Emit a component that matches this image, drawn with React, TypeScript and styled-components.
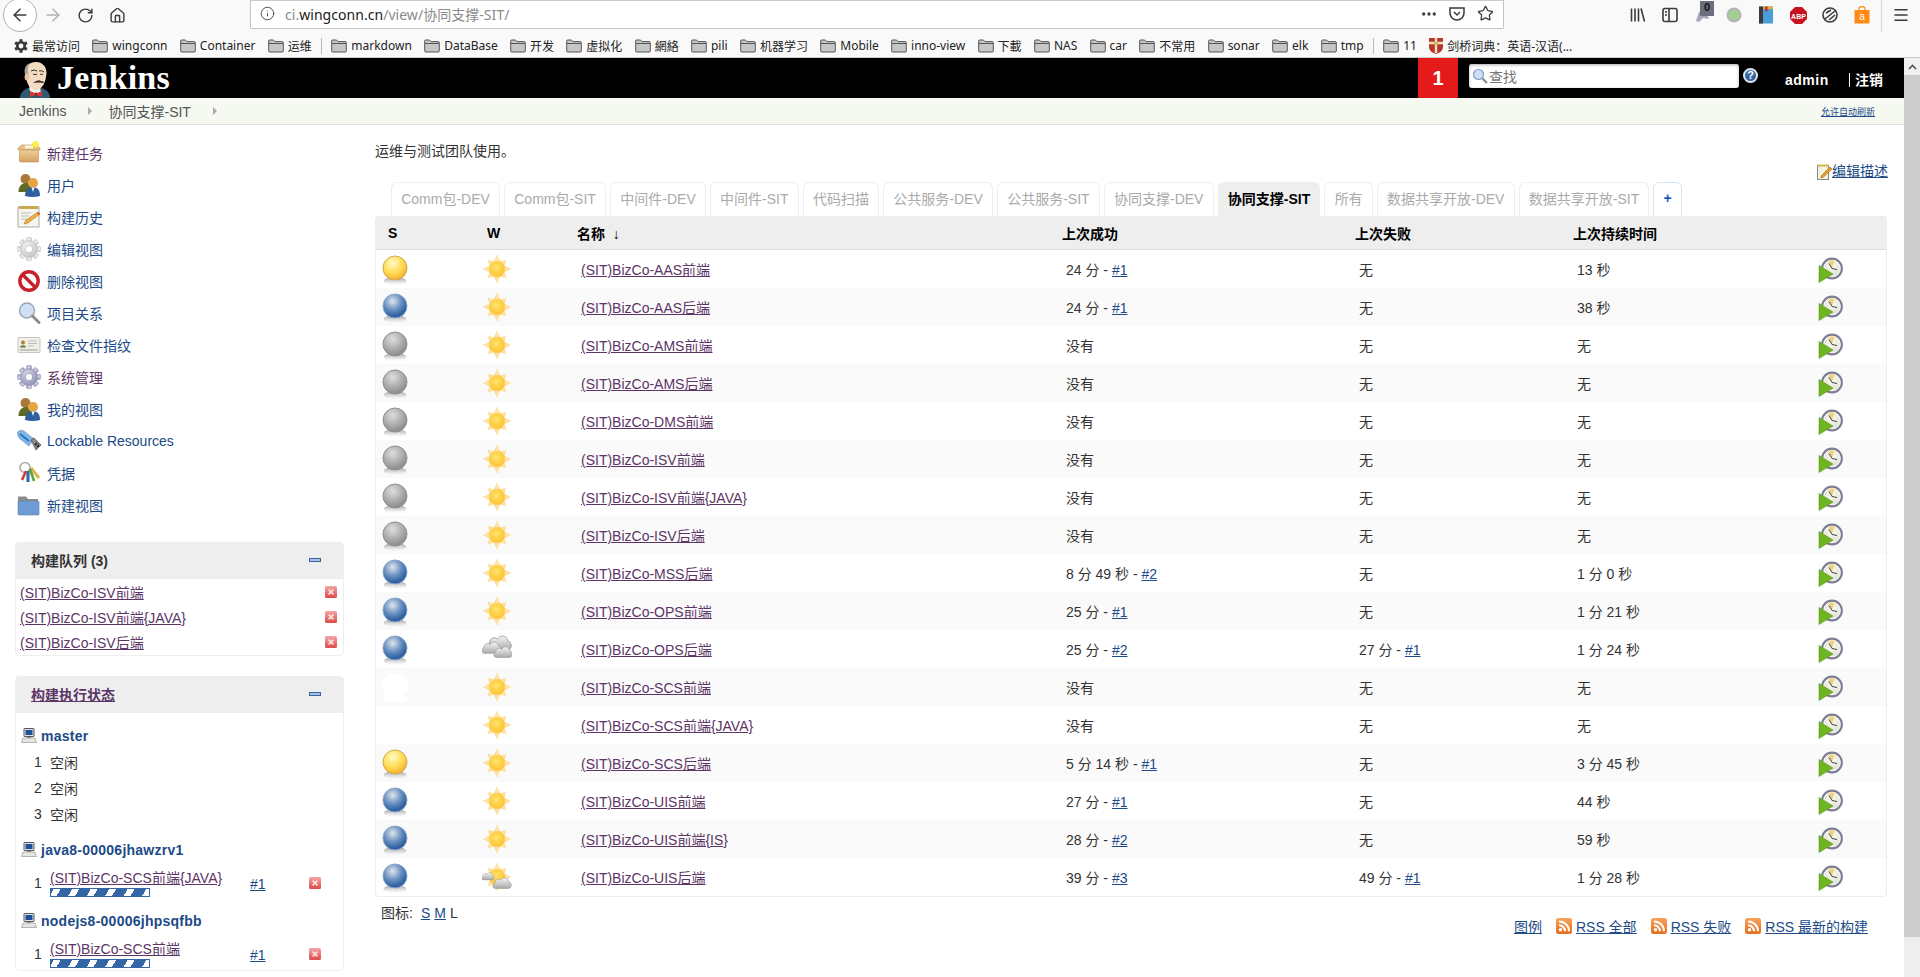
import React from "react";
import styled, { createGlobalStyle } from "styled-components";
import { ArrowLeft, ArrowRight, RotateCw, Home, Info, Star, Menu, Ellipsis } from "lucide-react";

const SANS = `"Liberation Sans", "Noto Sans CJK SC", sans-serif`;
const LINK = "#204a87";
const VISITED = "#5c3566";

const GlobalStyle = createGlobalStyle`
  html, body { margin: 0; padding: 0; height: 100%; overflow: hidden; background: #fff; }
  body { font-family: ${SANS}; font-size: 14px; color: #333; }
  a { cursor: pointer; }
`;

const Page = styled.div`
  width: 1920px;
  height: 977px;
  display: flex;
  flex-direction: column;
  overflow: hidden;
`;

/* ---------- browser chrome ---------- */
const Toolbar = styled.div`
  height: 33px;
  flex: none;
  display: flex;
  align-items: flex-start;
  background: #f9f9fa;
  color: #3b3b3d;
  padding-left: 3px;
`;
const BackButton = styled.div`
  width: 34px;
  height: 34px;
  margin-top: -2px;
  box-sizing: border-box;
  border: 1px solid #b1b1b3;
  border-radius: 50%;
  background: #fff;
  display: flex;
  align-items: center;
  justify-content: center;
  flex: none;
`;
const ToolSlot = styled.div<{ $muted?: boolean }>`
  position: relative;
  width: 32px;
  height: 30px;
  flex: none;
  display: flex;
  align-items: center;
  justify-content: center;
  color: ${(p) => (p.$muted ? "#b1b1b3" : "#3b3b3d")};
`;
const UrlBar = styled.div`
  width: 1254px;
  height: 29px;
  margin-left: 117px;
  box-sizing: border-box;
  flex: none;
  display: flex;
  align-items: center;
  background: #fff;
  border: 1px solid #c4c4c4;
  border-top-color: #ccc;
  border-radius: 0 0 2px 2px;
  padding: 0 4px 2px 9px;
  font-family: "Noto Sans", "Noto Sans CJK SC", sans-serif;
  font-size: 14px;
  color: #8a8a8a;
`;
const UrlText = styled.span`
  margin-left: 10px;
  flex: 1;
  letter-spacing: 0.04px;
  b { font-weight: 400; color: #1a1a1a; }
`;
const UrlAction = styled.span`
  width: 28px;
  display: flex;
  justify-content: center;
  color: #3b3b3d;
`;
const ToolRight = styled.div`
  margin-left: auto;
  display: flex;
  align-items: flex-start;
  padding-right: 3px;
`;
const ToolDivider = styled.div`
  width: 1px;
  height: 32px;
  background: #d8d8d8;
  margin: 0 3px;
`;
const AvastBadge = styled.span`
  position: absolute;
  top: 1px;
  right: 4px;
  width: 14px;
  height: 15px;
  background: #6d6d80;
  color: #111;
  font-size: 11px;
  font-weight: 700;
  text-align: center;
  line-height: 13px;
`;

const BookmarkBar = styled.div`
  height: 25px;
  flex: none;
  box-sizing: border-box;
  display: flex;
  align-items: center;
  gap: 12.3px;
  padding: 1px 0 0 14px;
  background: #f9f9fa;
  border-bottom: 1px solid #ccc;
  font-family: "Noto Sans", "Noto Sans CJK SC", sans-serif;
  font-size: 12px;
  color: #222;
  white-space: nowrap;
`;
const Bookmark = styled.span`
  display: flex;
  align-items: center;
  gap: 4px;
`;
const BookmarkSep = styled.span`
  width: 1px;
  height: 16px;
  background: #bbb;
  margin: 0 -3px;
`;

/* ---------- jenkins page ---------- */
const Viewport = styled.div`
  flex: 1;
  min-height: 0;
  display: flex;
`;
const Scrollbar = styled.div`
  width: 16px;
  flex: none;
  display: flex;
  flex-direction: column;
  background: #eee;
`;
const ScrollUp = styled.div`
  height: 17px;
  background: #f1f1f1;
  color: #555;
  display: flex;
  justify-content: center;
  align-items: center;
`;
const ScrollThumb = styled.div`
  height: 862px;
  background: #cdcdcd;
`;
const Content = styled.div`
  flex: 1;
  min-width: 0;
  display: flex;
  flex-direction: column;
`;
const Header = styled.header`
  height: 40px;
  flex: none;
  display: flex;
  align-items: stretch;
  background: #000;
  color: #fff;
`;
const Logo = styled.div`
  display: flex;
  align-items: flex-end;
  padding-left: 18px;
  width: 1400px;
  flex: none;
`;
const LogoText = styled.span`
  font-family: "Liberation Serif", serif;
  font-weight: 700;
  font-size: 34px;
  line-height: 36px;
  margin: 0 0 2px 6px;
  letter-spacing: 0.2px;
`;
const Badge = styled.div`
  width: 40px;
  flex: none;
  background: #e31b1b;
  font-weight: 700;
  font-size: 20px;
  display: flex;
  align-items: center;
  justify-content: center;
`;
const Search = styled.div`
  width: 270px;
  height: 24px;
  margin: 6px 0 0 11px;
  flex: none;
  display: flex;
  align-items: center;
  gap: 1px;
  padding-left: 3px;
  box-sizing: border-box;
  background: #fff;
  border-radius: 3px;
  box-shadow: inset 0 1px 3px #aaa;
  color: #777;
  font-size: 14px;
`;
const HelpIcon = styled.span`
  margin: 10px 0 0 4px;
  width: 15px;
  height: 15px;
  flex: none;
  box-sizing: border-box;
  border: 2px solid #dce6f2;
  background: #36659f;
  border-radius: 50%;
  color: #fff;
  font-size: 11px;
  font-weight: 700;
  line-height: 11px;
  text-align: center;
`;
const UserName = styled.span`
  margin: 0 0 0 27px;
  width: 64px;
  flex: none;
  font-weight: 700;
  font-size: 14px;
  letter-spacing: 0.5px;
  line-height: 40px;
  padding-top: 2px;
  box-sizing: border-box;
`;
const Logout = styled.span`
  font-weight: 700;
  font-size: 14px;
  line-height: 14px;
  height: 14px;
  margin-top: 15px;
  padding-left: 5px;
  border-left: 1px solid #fff;
`;
const Breadcrumb = styled.nav`
  height: 27px;
  flex: none;
  box-sizing: border-box;
  display: flex;
  align-items: center;
  padding: 0 29px 0 19px;
  background: #f6f8f2;
  border-bottom: 1px solid #ddd;
  color: #555;
  font-size: 14px;
`;
const CrumbArrow = styled.span`
  width: 0;
  height: 0;
  margin: 0 16px 0 22px;
  border-left: 4px solid #aaa;
  border-top: 4px solid transparent;
  border-bottom: 4px solid transparent;
`;
const AutoRefresh = styled.a`
  margin-left: auto;
  font-size: 9px;
  color: ${LINK};
  text-decoration: underline;
`;
const Body = styled.div`
  flex: 1;
  min-height: 0;
  display: flex;
`;
const Side = styled.aside`
  width: 329px;
  margin: 12px 31px 0 15px;
  flex: none;
`;
const Tasks = styled.div`
  display: flex;
  flex-direction: column;
  margin-bottom: 21px;
`;
const Task = styled.a<{ $visited?: boolean }>`
  height: 32px;
  display: flex;
  align-items: center;
  gap: 6px;
  margin-left: 2px;
  color: ${(p) => (p.$visited ? VISITED : LINK)};
`;
const Pane = styled.section`
  border: 1px solid #eee;
  border-radius: 4px;
  margin-bottom: 20px;
  box-sizing: border-box;
`;
const PaneHead = styled.div`
  height: 36px;
  box-sizing: border-box;
  display: flex;
  align-items: center;
  justify-content: space-between;
  padding: 0 22px 2px 15px;
  background: #eee;
  font-weight: 700;
  font-size: 14px;
  color: #333;
  a { color: ${VISITED}; text-decoration: underline; }
`;
const Collapse = styled.span`
  width: 12px;
  height: 4px;
  box-sizing: border-box;
  background: #a9c1e3;
  border: 1px solid #3465a4;
`;
const QueueList = styled.div`
  padding: 0 6px 0 4px;
`;
const QueueRow = styled.div`
  height: 25.33px;
  display: flex;
  align-items: center;
  justify-content: space-between;
  a { color: ${VISITED}; text-decoration: underline; }
`;
const NodeName = styled.div`
  height: 24px;
  margin: 11px 0 1px;
  display: flex;
  align-items: center;
  gap: 4px;
  padding-left: 5px;
  font-weight: 700;
  font-size: 14px;
  letter-spacing: 0.25px;
  color: ${LINK};
`;
const Executors = styled.div`
  padding-bottom: 1px;
`;
const IdleRow = styled.div`
  height: 26px;
  display: flex;
  align-items: center;
  padding-left: 18px;
  span:first-child { width: 16px; }
`;
const JobRow = styled.div`
  display: grid;
  grid-template-columns: 16px 200px 59px 12px;
  align-items: center;
  padding: 6px 0 1px 18px;
`;
const JobName = styled.div`
  a { display: block; line-height: 19px; color: ${VISITED}; text-decoration: underline; }
`;
const ProgressBar = styled.div`
  width: 100px;
  height: 9px;
  box-sizing: border-box;
  border: 1px solid #3465a4;
  background: #fff;
`;
const ProgressFill = styled.div`
  height: 100%;
  background: repeating-linear-gradient(-60deg, #fff 0, #fff 6px, #3465a4 6px, #3465a4 16px);
`;
const BuildLink = styled.a`
  color: ${LINK};
  text-decoration: underline;
  padding-top: 3px;
`;
const Main = styled.main`
  width: 1513px;
  flex: none;
`;
const DescRow = styled.div`
  height: 57px;
  display: flex;
  justify-content: space-between;
  color: #333;
`;
const DescText = styled.div`
  padding-top: 17px;
  line-height: 18px;
`;
const EditDesc = styled.a`
  align-self: flex-end;
  display: flex;
  align-items: flex-end;
  margin-bottom: 2px;
  color: ${LINK};
  text-decoration: underline;
`;
const Tabs = styled.div`
  display: flex;
  gap: 4px;
  padding-left: 16px;
  height: 34px;
`;
const Tab = styled.div<{ $active?: boolean; $plus?: boolean }>`
  box-sizing: border-box;
  padding: 0 ${(p) => (p.$plus ? 9 : 9.2)}px 3px;
  display: flex;
  align-items: center;
  white-space: nowrap;
  border: 1px solid ${(p) => (p.$active ? "#eee" : p.$plus ? "#d5e5f7" : "#eee")};
  border-bottom: none;
  border-radius: 6px 6px 0 0;
  background: ${(p) => (p.$active ? "#eee" : "#fff")};
  color: ${(p) => (p.$active ? "#000" : p.$plus ? "#1a5fc4" : "#aaa")};
  font-weight: ${(p) => (p.$active || p.$plus ? 700 : 400)};
`;
const Table = styled.table`
  width: 1512px;
  table-layout: fixed;
  border-collapse: separate;
  border-spacing: 0;
  border: 1px solid #eee;
  border-top: none;
  border-radius: 4px;
`;
const Th = styled.th<{ $pad?: number }>`
  height: 33px;
  padding: 0 0 0 ${(p) => p.$pad ?? 6}px;
  background: #eee;
  border-bottom: 1px solid #ddd;
  text-align: left;
  font-size: 14px;
  color: #000;
`;
const Tr = styled.tr`
  &:nth-child(even) td { background: #fafafa; }
`;
const Td = styled.td<{ $pad?: number }>`
  height: 38px;
  padding: 0 0 0 ${(p) => p.$pad ?? 10}px;
  box-sizing: border-box;
  vertical-align: middle;
  color: #333;
  svg { display: block; }
`;
const JobLink = styled.a`
  color: ${VISITED};
  text-decoration: underline;
`;
const RunLink = styled.a`
  color: ${LINK};
  text-decoration: underline;
`;
const Footer = styled.div`
  display: flex;
  justify-content: space-between;
  padding: 7px 20px 0 6px;
`;
const IconSizes = styled.div`
  display: flex;
  gap: 4px;
  line-height: 18px;
  span:first-child { margin-right: 4px; }
  a { color: ${LINK}; text-decoration: underline; }
`;
const RssLinks = styled.div`
  display: flex;
  gap: 14px;
  margin-top: 12px;
`;
const RssLink = styled.a`
  display: flex;
  align-items: center;
  gap: 4px;
  color: ${LINK};
  text-decoration: underline;
`;

/* ---------- drawings ---------- */
const SharedDefs = styled.svg`
  position: absolute;
  width: 0;
  height: 0;
`;
const Defs = () => (
  <SharedDefs aria-hidden="true">
    <defs>
      <radialGradient id="ball-blue" cx="40%" cy="30%" r="72%">
        <stop offset="0" stopColor="#e0e6ea" />
        <stop offset="0.5" stopColor="#6a91c2" />
        <stop offset="0.9" stopColor="#2c5d9e" />
        <stop offset="1" stopColor="#3b6aa8" />
      </radialGradient>
      <radialGradient id="ball-yellow" cx="40%" cy="30%" r="75%">
        <stop offset="0" stopColor="#fffbc8" />
        <stop offset="0.55" stopColor="#ffdc55" />
        <stop offset="1" stopColor="#f7a72a" />
      </radialGradient>
      <radialGradient id="ball-grey" cx="40%" cy="30%" r="75%">
        <stop offset="0" stopColor="#dedede" />
        <stop offset="0.6" stopColor="#a8a8a8" />
        <stop offset="1" stopColor="#858585" />
      </radialGradient>
      <linearGradient id="ball-shadow" x1="0" y1="0" x2="0" y2="1">
        <stop offset="0" stopColor="#777" stopOpacity="0.75" />
        <stop offset="1" stopColor="#bbb" stopOpacity="0" />
      </linearGradient>
      <radialGradient id="sun-core" cx="45%" cy="40%" r="60%">
        <stop offset="0" stopColor="#ffe46a" />
        <stop offset="1" stopColor="#fdc22e" />
      </radialGradient>
      <linearGradient id="cloud-fill" x1="0" y1="0" x2="0" y2="1">
        <stop offset="0" stopColor="#f6f6f6" />
        <stop offset="1" stopColor="#a9a9a9" />
      </linearGradient>
      <radialGradient id="clock-face" cx="50%" cy="40%" r="60%">
        <stop offset="0" stopColor="#fdfdf5" />
        <stop offset="1" stopColor="#d8d8cc" />
      </radialGradient>
      <linearGradient id="red-box" x1="0" y1="0" x2="0" y2="1">
        <stop offset="0" stopColor="#f3a6a6" />
        <stop offset="1" stopColor="#dc4a4a" />
      </linearGradient>
      <linearGradient id="rss-box" x1="0" y1="0" x2="0" y2="1">
        <stop offset="0" stopColor="#f7a25a" />
        <stop offset="1" stopColor="#e4701e" />
      </linearGradient>
      <linearGradient id="carton" x1="0" y1="0" x2="0" y2="1">
        <stop offset="0" stopColor="#f0d09c" />
        <stop offset="1" stopColor="#d3a260" />
      </linearGradient>
      <radialGradient id="steel" cx="40%" cy="35%" r="70%">
        <stop offset="0" stopColor="#f7f7f7" />
        <stop offset="1" stopColor="#c2c2c2" />
      </radialGradient>
      <radialGradient id="steel-blue" cx="40%" cy="35%" r="70%">
        <stop offset="0" stopColor="#dcdcec" />
        <stop offset="1" stopColor="#8c8cb4" />
      </radialGradient>
    </defs>
  </SharedDefs>
);

type BallColor = "blue" | "yellow" | "grey" | "ghost" | "none";

const Ball = ({ color }: { color: BallColor }) => {
  if (color === "none") return <svg width="26" height="32" />;
  if (color === "ghost")
    return (
      <svg width="26" height="32" viewBox="0 0 26 32">
        <circle cx="13" cy="15" r="13" fill="#fff" />
        <ellipse cx="13" cy="28" rx="13" ry="3.5" fill="#fff" />
      </svg>
    );
  const stroke = color === "blue" ? "#86a4cc" : color === "yellow" ? "#c9ad4e" : "#909090";
  return (
    <svg width="26" height="32" viewBox="0 0 26 32">
      <ellipse cx="13" cy="28" rx="11.5" ry="4" fill="url(#ball-shadow)" />
      <circle cx="13" cy="15" r="12" fill={`url(#ball-${color})`} stroke={stroke} />
    </svg>
  );
};

const Rays = ({ cx, cy, r }: { cx: number; cy: number; r: number }) => (
  <>
    {[0, 45, 90, 135, 180, 225, 270, 315].map((a, i) => {
      const tip = i % 2 === 0 ? r : r * 0.9;
      return (
        <g key={a} transform={`rotate(${a} ${cx} ${cy})`}>
          <polygon points={`${cx - 3.4},${cy - 7} ${cx},${cy - tip} ${cx + 3.4},${cy - 7}`} fill="#ffdc94" />
          <path d={`M${cx} ${cy - 8} V${cy - tip + 2}`} stroke="#fff0c8" strokeWidth="0.8" />
        </g>
      );
    })}
  </>
);

const CloudShape = ({ x, y, s }: { x: number; y: number; s: number }) => (
  <g transform={`translate(${x} ${y}) scale(${s})`}>
    <path
      d="M4 18 C0.5 18 0 12.5 3.5 11.5 C3 6.5 9 5 11 8 C13 3 20.5 4 20.5 9.5 C25 9.5 25.5 18 20.5 18 Z"
      fill="url(#cloud-fill)"
      stroke="#999"
      strokeWidth="0.8"
    />
  </g>
);

const Weather = ({ kind }: { kind: "sun" | "cloud" | "partly" }) => (
  <svg width="30" height="30" viewBox="0 0 30 30">
    {kind !== "cloud" && (
      <>
        <Rays cx={15} cy={15} r={14.5} />
        <circle cx="15" cy="15" r="8" fill="url(#sun-core)" stroke="#fbd98a" strokeWidth="0.6" />
      </>
    )}
    {kind === "cloud" && (
      <>
        <CloudShape x={4} y={-3} s={1.05} />
        <CloudShape x={-1} y={4} s={0.85} />
        <CloudShape x={11} y={9} s={0.8} />
      </>
    )}
    {kind === "partly" && (
      <>
        <CloudShape x={-1} y={8} s={0.55} />
        <CloudShape x={10} y={12} s={0.8} />
      </>
    )}
  </svg>
);

const ClockRun = () => (
  <svg width="25" height="28" viewBox="0 -1.5 25 28">
    <circle cx="14" cy="12" r="9.8" fill="url(#clock-face)" stroke="#7d7d95" strokeWidth="2.2" />
    <circle cx="14" cy="12" r="8.2" fill="none" stroke="#fff" strokeWidth="0.9" />
    <path d="M14 12 L10.5 4.5 A8 8 0 0 1 16.5 4.3 Z" fill="#ecd27a" />
    <path d="M14 12 L11 7 M14 12 L19 13" stroke="#444" strokeWidth="1" />
    <polygon points="1,9 15,17.5 1,26" fill="#6fb51f" stroke="#4f8f14" strokeWidth="0.5" />
  </svg>
);

const RedX = () => (
  <svg width="12" height="12" viewBox="0 0 12 12">
    <rect width="12" height="12" rx="1.5" fill="url(#red-box)" />
    <path d="M3.6 3.6 L8.4 8.4 M8.4 3.6 L3.6 8.4" stroke="#fbe3e3" strokeWidth="1.6" />
  </svg>
);

const Rss = () => (
  <svg width="16" height="16" viewBox="0 0 16 16">
    <rect width="16" height="16" rx="2.5" fill="url(#rss-box)" />
    <circle cx="4.5" cy="11.8" r="1.7" fill="#fff" />
    <path d="M3 7.2 A6 6 0 0 1 9 13.3 M3 3.4 A9.8 9.8 0 0 1 13 13.3" fill="none" stroke="#fff" strokeWidth="2" />
  </svg>
);

const Computer = () => (
  <svg width="16" height="15" viewBox="0 0 16 15">
    <rect x="3" y="0.5" width="10" height="8" rx="0.5" fill="#dfe3e8" stroke="#555" />
    <rect x="4.5" y="2" width="7" height="5" fill="#1f4f96" />
    <rect x="6" y="9" width="4" height="1" fill="#888" />
    <path d="M2 10 H14 L15.5 14.5 H0.5 Z" fill="#e6e6e0" stroke="#999" strokeWidth="0.7" />
  </svg>
);

const FolderSmall = () => (
  <svg width="16" height="14" viewBox="0 0 16 14">
    <path
      d="M0.7 2 Q0.7 1 1.7 1 H5.5 L7 2.6 H14.3 Q15.3 2.6 15.3 3.6 V12 Q15.3 13 14.3 13 H1.7 Q0.7 13 0.7 12 Z"
      fill="#c6c6c6"
      stroke="#555"
    />
    <path d="M1 4.5 H15" stroke="#555" />
  </svg>
);

const Gear = ({ fill, stroke }: { fill: string; stroke: string }) => (
  <svg width="24" height="24" viewBox="0 0 24 24">
    {[0, 45, 90, 135, 180, 225, 270, 315].map((a) => (
      <rect key={a} x="9.5" y="0.5" width="5" height="6" rx="1" fill={fill} stroke={stroke} strokeWidth="0.5" transform={`rotate(${a} 12 12)`} />
    ))}
    <circle cx="12" cy="12" r="8.5" fill={fill} stroke={stroke} strokeWidth="0.5" />
    <circle cx="12" cy="12" r="3.8" fill="#fff" stroke={stroke} strokeWidth="0.8" />
  </svg>
);

const Users = () => (
  <svg width="24" height="24" viewBox="0 0 24 24">
    <circle cx="8.5" cy="6" r="5" fill="#a87a35" />
    <path d="M1.5 19 C1.5 12 6 10 9 10 C12 10 15 12 15 19 Z" fill="#5f6b25" />
    <circle cx="16" cy="10" r="5" fill="#e8a444" />
    <path d="M8 23 C8 16 12 14.5 16 14.5 C20 14.5 23 16 23 23 Q16 25 8 23 Z" fill="#2f5f9f" />
    <path d="M14.5 14.5 L16 19 L17.5 14.5 Z" fill="#fff" />
  </svg>
);

const TASK_ICONS: Record<string, React.ReactNode> = {
  box: (
    <svg width="24" height="24" viewBox="0 0 24 24">
      <path d="M1 7 L5 4 H19 L23 7 V9 H1 Z" fill="#e8c288" stroke="#b98f52" strokeWidth="0.6" />
      <rect x="2.5" y="9" width="19" height="12" rx="1" fill="url(#carton)" stroke="#b98f52" strokeWidth="0.6" />
      <rect x="8" y="4.5" width="8" height="3" fill="#fff4dc" />
      <circle cx="18.5" cy="3.5" r="3" fill="#fff04a" stroke="#f3d21c" strokeWidth="0.5" />
    </svg>
  ),
  users: <Users />,
  notes: (
    <svg width="24" height="24" viewBox="0 0 24 24">
      <rect x="1" y="2" width="21" height="20" fill="#f6f6ee" stroke="#aaa" />
      <rect x="2" y="1" width="19" height="3" fill="#c9a84e" />
      <path d="M4 8 H14 M4 11 H12 M4 14 H10" stroke="#bbb" />
      <path d="M7 19 L9 15 L21 7 L23 9 L11 18 Z" fill="#f0b040" stroke="#a46a1a" strokeWidth="0.5" />
      <path d="M21 7 L23 9 L22 10 L20 8 Z" fill="#d8452e" />
    </svg>
  ),
  gear: <Gear fill="url(#steel)" stroke="#bdbdbd" />,
  forbid: (
    <svg width="24" height="24" viewBox="0 0 24 24">
      <circle cx="12" cy="12" r="9.2" fill="#fff" stroke="#c8202a" strokeWidth="3.4" />
      <path d="M5.5 5.5 L18.5 18.5" stroke="#c8202a" strokeWidth="3.4" />
    </svg>
  ),
  search: (
    <svg width="24" height="24" viewBox="0 0 24 24">
      <circle cx="10" cy="9.5" r="7.5" fill="#cfe0f5" stroke="#9aa5b4" strokeWidth="1.4" />
      <path d="M15.5 15 L22 21.5" stroke="#8d8d8d" strokeWidth="3" strokeLinecap="round" />
    </svg>
  ),
  card: (
    <svg width="24" height="24" viewBox="0 0 24 24">
      <rect x="1" y="4.5" width="22" height="15" rx="1" fill="#f0f0e8" stroke="#c4c4c4" />
      <circle cx="6" cy="9.5" r="2" fill="#b4802e" />
      <path d="M3 14.5 C3 11.5 9 11.5 9 14.5 Z" fill="#6a7a2a" />
      <path d="M11 8 H20 M11 10.5 H20 M11 13 H17" stroke="#bbb" />
      <path d="M3 17 H21" stroke="#999" />
    </svg>
  ),
  manage: <Gear fill="url(#steel-blue)" stroke="#8a8aa8" />,
  usb: (
    <svg width="24" height="24" viewBox="0 0 24 24">
      <path d="M0.5 3 Q3 0 7 2 L17 10 L12 17 L3 10 Q0 7 0.5 3 Z" fill="#7fb7e8" stroke="#88a" strokeWidth="0.6" />
      <path d="M3 5 L12 12" stroke="#1b70c0" strokeWidth="1.6" />
      <path d="M14 11 L17 9 L24 16 L19 21 Z" fill="#888" stroke="#333" strokeWidth="0.6" />
      <path d="M18 16 L20 14 M20 18 L22 16" stroke="#111" strokeWidth="1.4" />
    </svg>
  ),
  keys: (
    <svg width="24" height="24" viewBox="0 0 24 24">
      <circle cx="8" cy="6.5" r="5" fill="none" stroke="#aaa" strokeWidth="1.6" />
      <path d="M14 7 L22 17" stroke="#d9b54a" strokeWidth="3" />
      <path d="M11 10 L11 21" stroke="#2d6fb5" strokeWidth="3.2" />
      <path d="M13 8 L17 20" stroke="#5ea83a" strokeWidth="2.6" />
      <path d="M9 10 L5 19" stroke="#d23a3a" strokeWidth="2.6" />
    </svg>
  ),
  folder: (
    <svg width="24" height="24" viewBox="0 0 24 24">
      <path d="M1 3.5 H9 L11 6 H21 V10 H1 Z" fill="#8c8c86" />
      <rect x="1" y="8" width="21" height="14" rx="1" fill="#6f9ad2" stroke="#5a80b0" strokeWidth="0.6" />
    </svg>
  ),
};

const JenkinsHead = () => (
  <svg width="33" height="36" viewBox="0 0 33 36">
    <path d="M2 36 C2 31 5 28 10 26 L24 26 C29 28 32 31 32 36 Z" fill="#2f5a72" />
    <path d="M11 23 L22 25 L23 31 L17 33 L12 30 Z" fill="#f2f2f2" />
    <path d="M8 13 C6 4 12 0 18 0 C26 0 30 7 28 15 C27 22 23 28 18 28 C13 28 9 23 8 15 Z" fill="#f3dcc2" />
    <path d="M8 15 C5 8 7 3 12 1 C9 5 10 10 11 14 L9 17 Z" fill="#a8a198" />
    <ellipse cx="9" cy="15" rx="2.4" ry="3.6" fill="#e8c4a2" />
    <path d="M13 9 Q16 7 19 9 M21 9 Q24 8 26 10 M15 12 Q17 13.5 19 12 M22 12 Q24 13 25 12" stroke="#3a2d25" strokeWidth="1" fill="none" />
    <path d="M15 21 Q20 17 23 19 Q26 19 26 21 Q21 20 15 21 Z" fill="#3a2d25" />
    <path d="M12 29 L18 31.5 L24 29 L24 35 L18 33 L12 35 Z" fill="#d33833" />
    <circle cx="18" cy="32" r="1.4" fill="#a52420" />
  </svg>
);

const SearchIcon = () => (
  <svg width="16" height="16" viewBox="0 0 16 16">
    <circle cx="6.5" cy="6.5" r="5" fill="#cfe0f5" stroke="#7d9cc6" strokeWidth="1.2" />
    <path d="M10.5 10.5 L15 15" stroke="#888" strokeWidth="2.2" />
  </svg>
);

const NoteIcon = () => (
  <svg width="15" height="16" viewBox="0 0 15 16">
    <rect x="0.5" y="1.5" width="11" height="14" fill="#f3f1e0" stroke="#888" />
    <rect x="0.5" y="0.5" width="11" height="2" fill="#d9b54a" />
    <path d="M4 12 L13 3 L15 5 L6 13.5 L4 14 Z" fill="#e8a020" stroke="#8a5a10" strokeWidth="0.5" />
  </svg>
);

const ExtIcon = ({ kind }: { kind: string }) => {
  switch (kind) {
    case "library":
      return (
        <svg width="16" height="16" viewBox="0 0 16 16" fill="none" stroke="#3b3b3d" strokeWidth="1.6">
          <path d="M1.5 1.5 V14.5 M5 1.5 V14.5 M8.5 1.5 V14.5 M11 1.5 L14.5 14.5" />
        </svg>
      );
    case "sidebar":
      return (
        <svg width="16" height="16" viewBox="0 0 16 16" fill="none" stroke="#3b3b3d" strokeWidth="1.6">
          <rect x="1" y="1.5" width="14" height="13" rx="2" />
          <path d="M7 1.5 V14.5 M3 5 H5 M3 8 H5" />
        </svg>
      );
    case "avast":
      return (
        <svg width="16" height="16" viewBox="0 0 16 16">
          <path d="M2 14 L5 5 L10 2 L13 7 L15 12 L9 11 L5 15 Z" fill="#a7a7c0" />
        </svg>
      );
    case "dot":
      return (
        <svg width="16" height="16" viewBox="0 0 16 16">
          <circle cx="8" cy="8" r="7.5" fill="#b5b5b5" />
          <circle cx="8" cy="8" r="5" fill="#9ed28e" />
        </svg>
      );
    case "book":
      return (
        <svg width="16" height="18" viewBox="0 0 16 18">
          <rect x="1" y="0.5" width="14" height="17" fill="#4b9fd8" />
          <rect x="1" y="0.5" width="4" height="17" fill="#3a3a3a" />
          <rect x="5" y="0.5" width="10" height="2.5" fill="#e0b030" />
          <rect x="7" y="0.5" width="2.5" height="5" fill="#c83030" />
        </svg>
      );
    case "abp":
      return (
        <svg width="17" height="17" viewBox="0 0 17 17">
          <polygon points="5,0 12,0 17,5 17,12 12,17 5,17 0,12 0,5" fill="#c7121f" />
          <text x="8.5" y="11.5" fontSize="7" fontWeight="700" fill="#fff" textAnchor="middle" fontFamily="Liberation Sans">ABP</text>
        </svg>
      );
    case "globe":
      return (
        <svg width="16" height="16" viewBox="0 0 16 16" fill="none" stroke="#3b3b3d" strokeWidth="1.6">
          <circle cx="8" cy="8" r="7" />
          <path d="M3 12 L13 4 M4 6 L9 3 M7 13 L13 8" />
        </svg>
      );
    case "shop":
      return (
        <svg width="16" height="18" viewBox="0 0 16 18">
          <path d="M0.5 4 H15.5 V17.5 H0.5 Z" fill="#ff8a15" />
          <path d="M5 4 V2 Q8 -1 11 2 V4" fill="none" stroke="#ff8a15" strokeWidth="1.2" />
          <text x="8" y="14" fontSize="10" fill="#fff" textAnchor="middle" fontFamily="Liberation Sans">a</text>
        </svg>
      );
    default:
      return null;
  }
};

const Pocket = () => (
  <svg width="16" height="16" viewBox="0 0 16 16" fill="none" stroke="#3b3b3d" strokeWidth="1.5">
    <path d="M1 2 H15 V7 A7 7 0 0 1 1 7 Z" />
    <path d="M5 6 L8 9 L11 6" />
  </svg>
);

const Crest = () => (
  <svg width="14" height="16" viewBox="0 0 14 16">
    <path d="M0 0 H14 V9 Q14 14 7 16 Q0 14 0 9 Z" fill="#b8352b" />
    <path d="M0 5 H14 M7 0 V15" stroke="#efe2c4" strokeWidth="2.4" />
    <rect x="5" y="4" width="4" height="3" fill="#d9b54a" />
  </svg>
);

const GearSmall = () => (
  <svg width="14" height="14" viewBox="0 0 14 14">
    {[0, 60, 120].map((a) => (
      <rect key={a} x="5.5" y="0.2" width="3" height="13.6" fill="#3b3b3d" transform={`rotate(${a} 7 7)`} />
    ))}
    <circle cx="7" cy="7" r="5" fill="#3b3b3d" />
    <circle cx="7" cy="7" r="2.4" fill="#f9f9fa" />
  </svg>
);

/* ---------- data ---------- */
const BOOKMARKS_A = ["wingconn", "Container", "运维"];
const BOOKMARKS_B = ["markdown", "DataBase", "开发", "虚拟化", "網絡", "pili", "机器学习", "Mobile", "inno-view", "下載", "NAS", "car", "不常用", "sonar", "elk", "tmp"];

const TASKS = [
  { icon: "box", label: "新建任务", visited: true },
  { icon: "users", label: "用户" },
  { icon: "notes", label: "构建历史" },
  { icon: "gear", label: "编辑视图" },
  { icon: "forbid", label: "删除视图" },
  { icon: "search", label: "项目关系" },
  { icon: "card", label: "检查文件指纹" },
  { icon: "manage", label: "系统管理", visited: true },
  { icon: "users", label: "我的视图" },
  { icon: "usb", label: "Lockable Resources" },
  { icon: "keys", label: "凭据" },
  { icon: "folder", label: "新建视图" },
];

const TABS = ["Comm包-DEV", "Comm包-SIT", "中间件-DEV", "中间件-SIT", "代码扫描", "公共服务-DEV", "公共服务-SIT", "协同支撑-DEV", "协同支撑-SIT", "所有", "数据共享开放-DEV", "数据共享开放-SIT"];

interface Job {
  ball: BallColor;
  weather?: "sun" | "cloud" | "partly";
  name: string;
  ok?: [string, string];
  fail?: [string, string];
  time: string;
}

const JOBS: Job[] = [
  { ball: "yellow", name: "(SIT)BizCo-AAS前端", ok: ["24 分", "#1"], time: "13 秒" },
  { ball: "blue", name: "(SIT)BizCo-AAS后端", ok: ["24 分", "#1"], time: "38 秒" },
  { ball: "grey", name: "(SIT)BizCo-AMS前端", time: "无" },
  { ball: "grey", name: "(SIT)BizCo-AMS后端", time: "无" },
  { ball: "grey", name: "(SIT)BizCo-DMS前端", time: "无" },
  { ball: "grey", name: "(SIT)BizCo-ISV前端", time: "无" },
  { ball: "grey", name: "(SIT)BizCo-ISV前端{JAVA}", time: "无" },
  { ball: "grey", name: "(SIT)BizCo-ISV后端", time: "无" },
  { ball: "blue", name: "(SIT)BizCo-MSS后端", ok: ["8 分 49 秒", "#2"], time: "1 分 0 秒" },
  { ball: "blue", name: "(SIT)BizCo-OPS前端", ok: ["25 分", "#1"], time: "1 分 21 秒" },
  { ball: "blue", weather: "cloud", name: "(SIT)BizCo-OPS后端", ok: ["25 分", "#2"], fail: ["27 分", "#1"], time: "1 分 24 秒" },
  { ball: "ghost", name: "(SIT)BizCo-SCS前端", time: "无" },
  { ball: "none", name: "(SIT)BizCo-SCS前端{JAVA}", time: "无" },
  { ball: "yellow", name: "(SIT)BizCo-SCS后端", ok: ["5 分 14 秒", "#1"], time: "3 分 45 秒" },
  { ball: "blue", name: "(SIT)BizCo-UIS前端", ok: ["27 分", "#1"], time: "44 秒" },
  { ball: "blue", name: "(SIT)BizCo-UIS前端{IS}", ok: ["28 分", "#2"], time: "59 秒" },
  { ball: "blue", weather: "partly", name: "(SIT)BizCo-UIS后端", ok: ["39 分", "#3"], fail: ["49 分", "#1"], time: "1 分 28 秒" },
];

const Since = ({ value, empty }: { value?: [string, string]; empty: string }) =>
  value ? (
    <>
      {value[0]} - <RunLink>{value[1]}</RunLink>
    </>
  ) : (
    <>{empty}</>
  );

const BusyJob = ({ name }: { name: string }) => (
  <JobRow>
    <span>1</span>
    <JobName>
      <a>{name}</a>
      <ProgressBar>
        <ProgressFill />
      </ProgressBar>
    </JobName>
    <BuildLink>#1</BuildLink>
    <RedX />
  </JobRow>
);

export default function App() {
  return (
    <Page>
      <GlobalStyle />
      <Defs />
      <Toolbar>
        <BackButton>
          <ArrowLeft size={20} strokeWidth={1.8} />
        </BackButton>
        <ToolSlot $muted>
          <ArrowRight size={20} strokeWidth={1.8} />
        </ToolSlot>
        <ToolSlot>
          <RotateCw size={17} strokeWidth={2} />
        </ToolSlot>
        <ToolSlot>
          <Home size={17} strokeWidth={2} />
        </ToolSlot>
        <UrlBar>
          <Info size={15} strokeWidth={1.6} color="#555" />
          <UrlText>
            ci.<b>wingconn.cn</b>/view/协同支撑-SIT/
          </UrlText>
          <UrlAction>
            <Ellipsis size={18} strokeWidth={2.4} />
          </UrlAction>
          <UrlAction>
            <Pocket />
          </UrlAction>
          <UrlAction>
            <Star size={17} strokeWidth={1.8} />
          </UrlAction>
        </UrlBar>
        <ToolRight>
          {["library", "sidebar", "avast", "dot", "book", "abp", "globe", "shop"].map((k) => (
            <ToolSlot key={k}>
              <ExtIcon kind={k} />
              {k === "avast" && <AvastBadge>0</AvastBadge>}
            </ToolSlot>
          ))}
          <ToolDivider />
          <ToolSlot>
            <Menu size={18} strokeWidth={2} />
          </ToolSlot>
        </ToolRight>
      </Toolbar>
      <BookmarkBar>
        <Bookmark>
          <GearSmall />
          最常访问
        </Bookmark>
        {BOOKMARKS_A.map((b) => (
          <Bookmark key={b}>
            <FolderSmall />
            {b}
          </Bookmark>
        ))}
        <BookmarkSep />
        {BOOKMARKS_B.map((b) => (
          <Bookmark key={b}>
            <FolderSmall />
            {b}
          </Bookmark>
        ))}
        <BookmarkSep />
        <Bookmark>
          <FolderSmall />
          11
        </Bookmark>
        <Bookmark>
          <Crest />
          剑桥词典：英语-汉语(...
        </Bookmark>
      </BookmarkBar>
      <Viewport>
        <Content>
          <Header>
            <Logo>
              <JenkinsHead />
              <LogoText>Jenkins</LogoText>
            </Logo>
            <Badge>1</Badge>
            <Search>
              <SearchIcon />
              查找
            </Search>
            <HelpIcon>?</HelpIcon>
            <UserName>admin</UserName>
            <Logout>注销</Logout>
          </Header>
          <Breadcrumb>
            Jenkins
            <CrumbArrow />
            协同支撑-SIT
            <CrumbArrow />
            <AutoRefresh>允许自动刷新</AutoRefresh>
          </Breadcrumb>
          <Body>
            <Side>
              <Tasks>
                {TASKS.map((t) => (
                  <Task key={t.label} $visited={t.visited}>
                    {TASK_ICONS[t.icon]}
                    {t.label}
                  </Task>
                ))}
              </Tasks>
              <Pane>
                <PaneHead>
                  构建队列 (3)
                  <Collapse />
                </PaneHead>
                <QueueList>
                  {["(SIT)BizCo-ISV前端", "(SIT)BizCo-ISV前端{JAVA}", "(SIT)BizCo-ISV后端"].map((q) => (
                    <QueueRow key={q}>
                      <a>{q}</a>
                      <RedX />
                    </QueueRow>
                  ))}
                </QueueList>
              </Pane>
              <Pane>
                <PaneHead>
                  <a>构建执行状态</a>
                  <Collapse />
                </PaneHead>
                <Executors>
                  <NodeName>
                    <Computer />
                    master
                  </NodeName>
                  {[1, 2, 3].map((n) => (
                    <IdleRow key={n}>
                      <span>{n}</span>
                      <span>空闲</span>
                    </IdleRow>
                  ))}
                  <NodeName>
                    <Computer />
                    java8-00006jhawzrv1
                  </NodeName>
                  <BusyJob name="(SIT)BizCo-SCS前端{JAVA}" />
                  <NodeName>
                    <Computer />
                    nodejs8-00006jhpsqfbb
                  </NodeName>
                  <BusyJob name="(SIT)BizCo-SCS前端" />
                </Executors>
              </Pane>
            </Side>
            <Main>
              <DescRow>
                <DescText>运维与测试团队使用。</DescText>
                <EditDesc>
                  <NoteIcon />
                  编辑描述
                </EditDesc>
              </DescRow>
              <Tabs>
                {TABS.map((t) => (
                  <Tab key={t} $active={t === "协同支撑-SIT"}>
                    {t}
                  </Tab>
                ))}
                <Tab $plus>+</Tab>
              </Tabs>
              <Table>
                <colgroup>
                  <col width={103} />
                  <col width={92} />
                  <col width={485} />
                  <col width={293} />
                  <col width={218} />
                  <col width={242} />
                  <col width={77} />
                </colgroup>
                <thead>
                  <tr>
                    <Th $pad={12}>S</Th>
                    <Th $pad={8}>W</Th>
                    <Th>名称 &nbsp;↓</Th>
                    <Th>上次成功</Th>
                    <Th>上次失败</Th>
                    <Th>上次持续时间</Th>
                    <Th />
                  </tr>
                </thead>
                <tbody>
                  {JOBS.map((j) => (
                    <Tr key={j.name}>
                      <Td $pad={6}>
                        <Ball color={j.ball} />
                      </Td>
                      <Td $pad={3}>
                        <Weather kind={j.weather ?? "sun"} />
                      </Td>
                      <Td>
                        <JobLink>{j.name}</JobLink>
                      </Td>
                      <Td>
                        <Since value={j.ok} empty="没有" />
                      </Td>
                      <Td>
                        <Since value={j.fail} empty="无" />
                      </Td>
                      <Td>{j.time}</Td>
                      <Td $pad={9}>
                        <ClockRun />
                      </Td>
                    </Tr>
                  ))}
                </tbody>
              </Table>
              <Footer>
                <IconSizes>
                  <span>图标:</span>
                  <a>S</a>
                  <a>M</a>
                  <span>L</span>
                </IconSizes>
                <RssLinks>
                  <RssLink>图例</RssLink>
                  <RssLink>
                    <Rss />
                    RSS 全部
                  </RssLink>
                  <RssLink>
                    <Rss />
                    RSS 失败
                  </RssLink>
                  <RssLink>
                    <Rss />
                    RSS 最新的构建
                  </RssLink>
                </RssLinks>
              </Footer>
            </Main>
          </Body>
        </Content>
        <Scrollbar>
          <ScrollUp>
            <svg width="9" height="6" viewBox="0 0 9 6">
              <path d="M1 5 L4.5 1.5 L8 5" fill="none" stroke="#555" strokeWidth="1.6" />
            </svg>
          </ScrollUp>
          <ScrollThumb />
        </Scrollbar>
      </Viewport>
    </Page>
  );
}
